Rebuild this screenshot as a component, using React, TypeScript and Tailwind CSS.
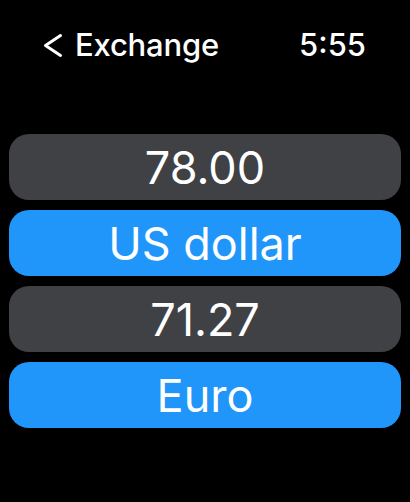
const rows = [
  { label: "78.00", tone: "bg-[#404145]" },
  { label: "US dollar", tone: "bg-[#2196fa]" },
  { label: "71.27", tone: "bg-[#404145]" },
  { label: "Euro", tone: "bg-[#2196fa]" },
];

export default function App() {
  return (
    <div className="h-[502px] w-[410px] bg-black text-white font-['Inter',sans-serif] overflow-hidden">
      <header className="flex h-[90px] items-center justify-between pl-[43px] pr-[44px]">
        <div className="flex items-center gap-[12px]">
          <svg width="20" height="25" viewBox="0 0 20 25" fill="none">
            <polyline
              points="17.5,2.5 2.5,12.5 17.5,22.5"
              stroke="white"
              strokeWidth="3"
              strokeLinecap="round"
              strokeLinejoin="round"
            />
          </svg>
          <span className="text-[31px] font-medium tracking-[-0.2px]">Exchange</span>
        </div>
        <span className="text-[31px] font-medium">5:55</span>
      </header>

      <div className="mt-[44px] flex flex-col gap-[10px] px-[9px]">
        {rows.map((row) => (
          <div
            key={row.label}
            className={`flex h-[66px] items-center justify-center rounded-[20px] ${row.tone}`}
          >
            <span className="text-[45px] leading-none">{row.label}</span>
          </div>
        ))}
      </div>
    </div>
  );
}
